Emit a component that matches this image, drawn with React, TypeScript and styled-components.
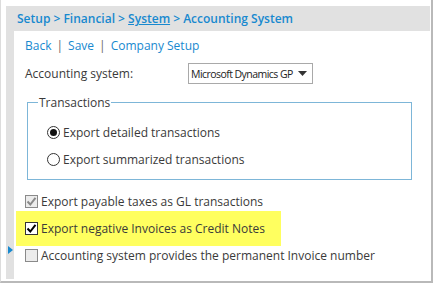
import React from 'react';
import styled, { createGlobalStyle } from 'styled-components';

const Global = createGlobalStyle`
  body {
    margin: 0;
    background: #ffffff;
    font-family: 'Open Sans', 'Noto Sans', sans-serif;
  }
`;

const BLUE = '#1889cf';
const TEXT = '#3a3a3a';

// styled components
const Frame = styled.div`
  width: 433px;
  height: 283px;
  box-sizing: border-box;
  padding: 6px 3px 4px 5px;
  border-left: 1px solid #dcdcdc;
  border-right: 2px solid #b9b9b9;
  border-bottom: 2px solid #b9b9b9;
`;

const Panel = styled.div`
  width: 424px;
  height: 273px;
  background: #e1e1e1;
  display: flex;
  flex-direction: column;
`;

const Header = styled.div`
  height: 25px;
  padding-left: 11px;
  display: flex;
  align-items: center;
  font-size: 12px;
  font-weight: 600;
  color: ${BLUE};
  white-space: pre;
`;

const Crumb = styled.span<{ $link?: boolean }>`
  text-decoration: ${(p) => (p.$link ? 'underline' : 'none')};
`;

const Body = styled.div`
  flex: 1;
  margin-left: 8px;
  background: #ffffff;
  position: relative;
  padding: 4px 0 0 11px;
  color: ${TEXT};
  font-size: 12px;
`;

const Links = styled.div`
  display: flex;
  align-items: center;
  gap: 5px;
  height: 20px;
  color: ${BLUE};
  font-size: 12px;
`;

const Sep = styled.span`
  color: #666;
`;

const FieldRow = styled.div`
  display: flex;
  align-items: center;
  margin-top: 8px;
  height: 21px;
`;

const Label = styled.span`
  width: 163px;
`;

const Select = styled.div`
  width: 125px;
  height: 21px;
  box-sizing: border-box;
  border: 1px solid #a9a9a9;
  display: flex;
  align-items: center;
  gap: 5px;
  padding: 0 0 0 2px;
  color: #222;
  font-size: 10.5px;
  letter-spacing: -0.55px;
  white-space: nowrap;
`;

const Group = styled.fieldset`
  margin: 10px 0 0 2px;
  width: 385px;
  height: 86px;
  box-sizing: border-box;
  border: 1px solid #7db6d8;
  padding: 12px 0 0 19px;
  display: flex;
  flex-direction: column;
  gap: 9px;
`;

const Legend = styled.legend`
  padding: 0 1px;
  margin-left: -9px;
  font-size: 12px;
  color: ${TEXT};
`;

const Option = styled.div`
  display: flex;
  align-items: center;
  gap: 3px;
  height: 18px;
`;

const Radio = styled.span<{ $on?: boolean }>`
  width: 13px;
  height: 13px;
  box-sizing: border-box;
  border: 1px solid #333;
  border-radius: 50%;
  display: flex;
  align-items: center;
  justify-content: center;
  &::after {
    content: '';
    width: 7px;
    height: 7px;
    border-radius: 50%;
    background: ${(p) => (p.$on ? '#111' : 'transparent')};
  }
`;

const Checks = styled.div`
  margin-top: 8px;
  display: flex;
  flex-direction: column;
`;

const CheckRow = styled.div<{ $mark?: boolean }>`
  display: flex;
  align-items: center;
  gap: 3px;
  height: ${(p) => (p.$mark ? '35px' : '27px')};
  margin: ${(p) => (p.$mark ? '-4px -9px' : '0 -9px')};
  padding-left: 9px;
  width: 256px;
  background: ${(p) => (p.$mark ? '#ffff5f' : 'transparent')};
  white-space: nowrap;
  position: relative;
`;

const Box = styled.span<{ $muted?: boolean }>`
  width: 13px;
  height: 13px;
  box-sizing: border-box;
  border: 1px solid ${(p) => (p.$muted ? '#8a8a8a' : '#333')};
  background: ${(p) => (p.$muted ? '#ececec' : '#ffffff')};
  display: flex;
  align-items: center;
  justify-content: center;
  flex-shrink: 0;
`;

const Marker = styled.span`
  position: absolute;
  left: -6px;
  top: 215px;
  width: 0;
  height: 0;
  border-top: 4.5px solid transparent;
  border-bottom: 4.5px solid transparent;
  border-left: 5px solid ${BLUE};
`;

const Tick = ({ color }: { color: string }) => (
  <svg width="11" height="11" viewBox="0 0 11 11">
    <path d="M1.5 5.5 L4.3 8.5 L9.5 1.8" fill="none" stroke={color} strokeWidth="2" />
  </svg>
);

const App = () => {
  return (
    <>
      <Global />
      <Frame>
        <Panel>
          <Header>
            {'Setup > Financial > '}
            <Crumb $link>System</Crumb>
            {' > Accounting System'}
          </Header>
          <Body>
            <Links>
              <span>Back</span>
              <Sep>|</Sep>
              <span>Save</span>
              <Sep>|</Sep>
              <span>Company Setup</span>
            </Links>
            <FieldRow>
              <Label>Accounting system:</Label>
              <Select>
                <span>Microsoft Dynamics GP</span>
                <svg width="9" height="5" viewBox="0 0 9 5">
                  <path d="M0 0 H9 L4.5 5 Z" fill="#333" />
                </svg>
              </Select>
            </FieldRow>
            <Group>
              <Legend>Transactions</Legend>
              <Option>
                <Radio $on />
                Export detailed transactions
              </Option>
              <Option>
                <Radio />
                Export summarized transactions
              </Option>
            </Group>
            <Checks>
              <CheckRow>
                <Box $muted>
                  <Tick color="#8a8a8a" />
                </Box>
                Export payable taxes as GL transactions
              </CheckRow>
              <CheckRow $mark>
                <Box>
                  <Tick color="#000" />
                </Box>
                Export negative Invoices as Credit Notes
              </CheckRow>
              <CheckRow>
                <Box $muted />
                Accounting system provides the permanent Invoice number
              </CheckRow>
            </Checks>
            <Marker />
          </Body>
        </Panel>
      </Frame>
    </>
  );
};

export default App;
